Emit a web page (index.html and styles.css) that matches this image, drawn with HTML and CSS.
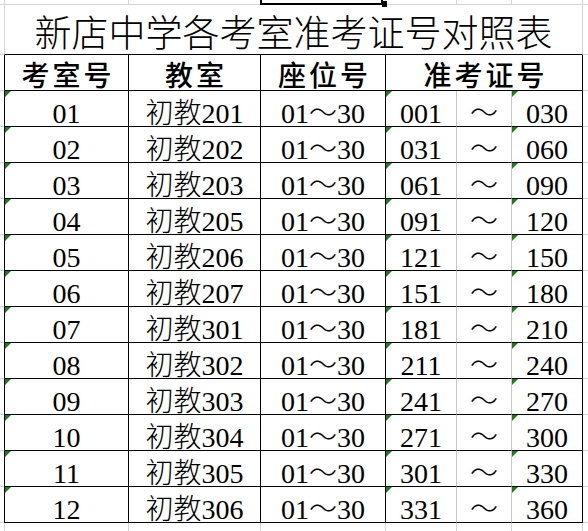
FILE: index.html
```html
<!DOCTYPE html>
<html lang="zh-CN">
<head>
<meta charset="utf-8">
<title>新店中学各考室准考证号对照表</title>
<link rel="stylesheet" href="styles.css">
</head>
<body>
<div class="sheet">
  <div class="sel"><span class="handle"></span></div>
  <div class="grid">
    <div class="title">新店中学各考室准考证号对照表</div>
    <div class="h first">考室号</div>
    <div class="h">教室</div>
    <div class="h">座位号</div>
    <div class="h span3">准考证号</div>

    <div class="c first tri">01</div><div class="c">初教201</div><div class="c">01～30</div><div class="c tri soft">001</div><div class="c soft">～</div><div class="c tri">030</div>
    <div class="c first tri">02</div><div class="c">初教202</div><div class="c">01～30</div><div class="c tri soft">031</div><div class="c soft">～</div><div class="c tri">060</div>
    <div class="c first tri">03</div><div class="c">初教203</div><div class="c">01～30</div><div class="c tri soft">061</div><div class="c soft">～</div><div class="c tri">090</div>
    <div class="c first tri">04</div><div class="c">初教205</div><div class="c">01～30</div><div class="c tri soft">091</div><div class="c soft">～</div><div class="c tri">120</div>
    <div class="c first tri">05</div><div class="c">初教206</div><div class="c">01～30</div><div class="c tri soft">121</div><div class="c soft">～</div><div class="c tri">150</div>
    <div class="c first tri">06</div><div class="c">初教207</div><div class="c">01～30</div><div class="c tri soft">151</div><div class="c soft">～</div><div class="c tri">180</div>
    <div class="c first tri">07</div><div class="c">初教301</div><div class="c">01～30</div><div class="c tri soft">181</div><div class="c soft">～</div><div class="c tri">210</div>
    <div class="c first tri">08</div><div class="c">初教302</div><div class="c">01～30</div><div class="c tri soft">211</div><div class="c soft">～</div><div class="c tri">240</div>
    <div class="c first tri">09</div><div class="c">初教303</div><div class="c">01～30</div><div class="c tri soft">241</div><div class="c soft">～</div><div class="c tri">270</div>
    <div class="c first tri">10</div><div class="c">初教304</div><div class="c">01～30</div><div class="c tri soft">271</div><div class="c soft">～</div><div class="c tri">300</div>
    <div class="c first tri">11</div><div class="c">初教305</div><div class="c">01～30</div><div class="c tri soft">301</div><div class="c soft">～</div><div class="c tri">330</div>
    <div class="c first tri">12</div><div class="c">初教306</div><div class="c">01～30</div><div class="c tri soft">331</div><div class="c soft">～</div><div class="c tri">360</div>
  </div>
</div>
</body>
</html>
```
FILE: styles.css
```css
html, body {
  margin: 0;
  padding: 0;
}
body {
  width: 588px;
  height: 531px;
  overflow: hidden;
  background-color: #fff;
  background-image:
    linear-gradient(#d4d4d4, #d4d4d4),
    linear-gradient(#d4d4d4, #d4d4d4),
    linear-gradient(#d4d4d4, #d4d4d4),
    linear-gradient(#d4d4d4, #d4d4d4),
    linear-gradient(#d4d4d4, #d4d4d4),
    linear-gradient(#d4d4d4, #d4d4d4),
    linear-gradient(#d4d4d4, #d4d4d4),
    linear-gradient(#d4d4d4, #d4d4d4),
    linear-gradient(#d4d4d4, #d4d4d4),
    repeating-linear-gradient(to bottom, #d4d4d4 0 1px, transparent 1px 36px);
  background-repeat: no-repeat;
  background-position:
    4px 0, 128px 0, 260px 0, 385px 0, 456px 0, 511px 0, 582px 0,
    0 4px, 0 54px, 0 90px;
  background-size:
    1px 100%, 1px 100%, 1px 100%, 1px 100%, 1px 100%, 1px 100%, 1px 100%,
    100% 1px, 100% 1px, 100% 441px;
  font-family: "Liberation Serif", "Noto Sans CJK SC", serif;
  color: #000;
}
.sheet {
  position: relative;
  padding: 4px 0 0 4px;
}
.grid {
  display: grid;
  grid-template-columns: 125px 132px 125px 71px 55px 71px;
  grid-template-rows: 51px repeat(13, 36px);
}
.grid > div {
  box-sizing: border-box;
  background: #fff;
  position: relative;
  display: flex;
  justify-content: center;
  white-space: nowrap;
}
.title {
  grid-column: 1 / span 6;
  border-top: 1px solid #d4d4d4;
  border-left: 1px solid #d4d4d4;
  border-right: 1px solid #d4d4d4;
  border-bottom: 1px solid #000;
  font-family: "Noto Sans CJK SC", sans-serif;
  font-weight: 300;
  font-size: 37px;
  line-height: 37px;
  align-items: center;
  padding-top: 3px;
}
.h {
  border-right: 1px solid #000;
  border-bottom: 1px solid #000;
  font-family: "Noto Sans CJK SC", sans-serif;
  font-weight: 500;
  font-size: 28px;
  line-height: 28px;
  letter-spacing: 3px;
  padding-left: 3px;
  align-items: center;
  padding-top: 3px;
}
.span3 {
  grid-column: span 3;
}
.first {
  border-left: 1px solid #000;
}
.c {
  border-right: 1px solid #000;
  border-bottom: 1px solid #000;
  font-size: 28px;
  line-height: 24px;
  align-items: flex-end;
  font-weight: 300;
}
.c.soft {
  border-right-color: #c8c8c8;
}
.tri::before {
  content: "";
  position: absolute;
  left: 0;
  top: 0;
  width: 0;
  height: 0;
  border-top: 6px solid #1c7c1c;
  border-right: 6px solid transparent;
}
.sel {
  position: absolute;
  left: 260px;
  top: -20px;
  width: 123px;
  height: 25px;
  box-sizing: border-box;
  border: 2px solid #000;
  z-index: 2;
}
.handle {
  position: absolute;
  right: -6px;
  bottom: -4px;
  width: 5px;
  height: 6px;
  background: #000;
}
```
